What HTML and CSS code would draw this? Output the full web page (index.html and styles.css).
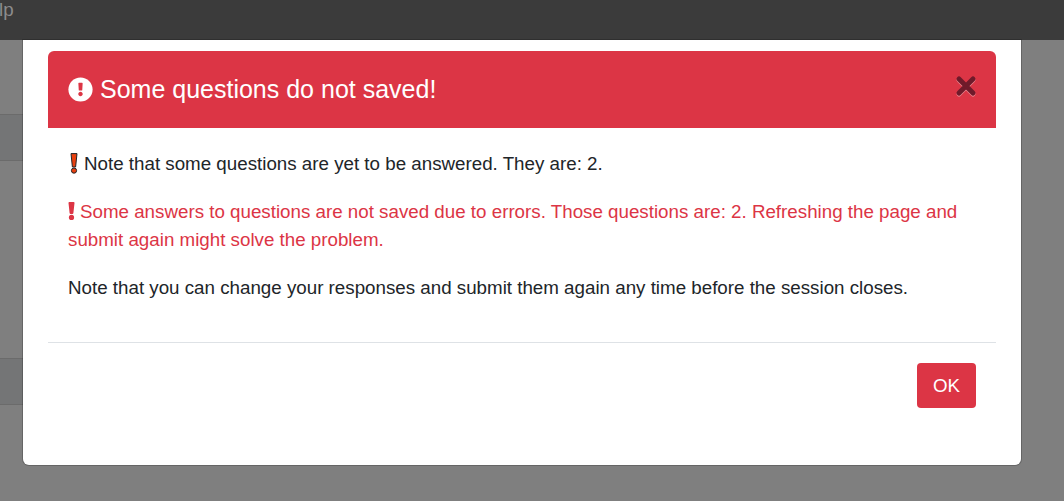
FILE: index.html
```html
<!DOCTYPE html>
<html lang="en">
<head>
    <meta charset="UTF-8">
    <meta name="viewport" content="width=device-width, initial-scale=1.0">
    <title>Some questions do not saved!</title>
    <link rel="stylesheet" href="styles.css">
</head>
<body>
    <nav class="navbar">
        <span class="nav-link">lp</span>
    </nav>

    <main class="page">
        <div class="panel-row panel-first"></div>
        <div class="panel-row panel-second"></div>

        <!-- Warning dialog -->
        <div class="modal">
            <div class="modal-header">
                <h4 class="modal-title">
                    <svg class="title-icon" viewBox="0 0 512 512">
                        <path fill="#ffffff" d="M504 256c0 137-111 248-248 248S8 393 8 256 119 8 256 8s248 111 248 248z"/>
                        <path fill="#dc3545" d="M256 300c-25 0-46 21-46 46s21 46 46 46 46-21 46-46-21-46-46-46zM212 130l8 136c0 7 6 12 12 12h48c6 0 12-5 12-12l8-136c0-7-6-13-12-13h-64c-7 0-12 6-12 13z"/>
                    </svg>
                    Some questions do not saved!
                </h4>
                <svg class="close-icon" viewBox="0 0 22 22">
                    <path d="M4 4 L18 18 M18 4 L4 18"/>
                </svg>
            </div>
            <div class="modal-body">
                <p class="note">
                    <svg class="mark mark-outline" viewBox="0 0 8 21">
                        <path d="M1 .6 H7 L5.6 14 H2.4 Z"/>
                        <circle cx="4" cy="17.6" r="2.6"/>
                    </svg>Note that some questions are yet to be answered. They are: 2.
                </p>
                <p class="note note-error">
                    <svg class="mark mark-solid" viewBox="0 0 7 18">
                        <path d="M1.4 0 H5.6 Q6.6 0 6.5 1 L5.4 11 Q5.3 12 4.4 12 H2.6 Q1.7 12 1.6 11 L.5 1 Q.4 0 1.4 0 Z"/>
                        <circle cx="3.5" cy="15.4" r="2.6"/>
                    </svg>Some answers to questions are not saved due to errors. Those questions are: 2. Refreshing the page and submit again might solve the problem.
                </p>
                <p class="note">Note that you can change your responses and submit them again any time before the session closes.</p>
            </div>
            <div class="modal-footer">
                <button class="ok-button">OK</button>
            </div>
        </div>
    </main>
</body>
</html>
```

FILE: styles.css
```css
/* General Styles */
html, body {
    height: 100%;
}
body {
    margin: 0;
    font-family: "Liberation Sans", Arial, sans-serif;
    font-size: 18.75px;
    line-height: 28px;
    color: #212529;
    background-color: #7f7f7f;
    display: flex;
    flex-direction: column;
    overflow: hidden;
}

/* Navbar */
.navbar {
    height: 40px;
    flex: none;
    background: #3b3b3b;
    overflow: hidden;
}
.nav-link {
    display: block;
    margin-left: -1px;
    font-size: 18.75px;
    line-height: 20px;
    color: #8c8c8c;
}

/* Page behind the dialog */
.page {
    position: relative;
    flex: 1;
}
.panel-row {
    height: 45px;
    margin-right: 60px;
    background: #747576;
    border-top: 1px solid #6b6b6b;
    border-bottom: 1px solid #6b6b6b;
}
.panel-first {
    margin-top: 74px;
}
.panel-second {
    margin-top: 197px;
}

/* Modal */
.modal {
    position: absolute;
    top: 0;
    left: 23px;
    width: 998px;
    height: 425px;
    box-sizing: border-box;
    padding: 11px 25px 0;
    background: #ffffff;
    border-radius: 0 0 6px 6px;
    box-shadow: 0 0 0 1px rgba(0, 0, 0, 0.2);
}
.modal-header {
    height: 77px;
    box-sizing: border-box;
    padding: 0 20px;
    background: #dc3545;
    border-radius: 6px 6px 0 0;
    display: flex;
    justify-content: space-between;
    align-items: center;
}
.modal-title {
    margin: 0 0 2px;
    font-size: 25px;
    font-weight: 400;
    color: #ffffff;
    display: flex;
    align-items: center;
    gap: 7px;
}
.title-icon {
    width: 25px;
    height: 25px;
    margin-top: 2px;
}
.close-icon {
    width: 22px;
    height: 22px;
    margin-right: -1px;
    margin-top: -8px;
    fill: none;
    stroke: #6f1a2a;
    stroke-width: 5;
    stroke-linecap: round;
    filter: drop-shadow(0 1px 0 rgba(255, 255, 255, 0.4));
}
.modal-body {
    padding: 22px 20px 28px;
    border-bottom: 1px solid #dee2e6;
}
.note {
    margin: 0 0 20px;
}
.note:last-child {
    margin-bottom: 12px;
}
.note-error {
    color: #dc3545;
}
.mark {
    vertical-align: -4px;
}
.mark-outline {
    width: 8px;
    height: 21px;
    margin: 0 6px 0 2px;
    fill: #e8400f;
    stroke: #212529;
    stroke-width: 1;
}
.mark-solid {
    width: 7px;
    height: 18px;
    margin: 0 5px 0 0;
    vertical-align: -2px;
    fill: #dc3545;
}

/* Footer */
.modal-footer {
    padding: 20px;
    display: flex;
    justify-content: flex-end;
}
.ok-button {
    width: 59px;
    height: 45px;
    background: #dc3545;
    color: #ffffff;
    font-family: inherit;
    font-size: 18.75px;
    border: none;
    border-radius: 4px;
    padding: 0;
}
```
